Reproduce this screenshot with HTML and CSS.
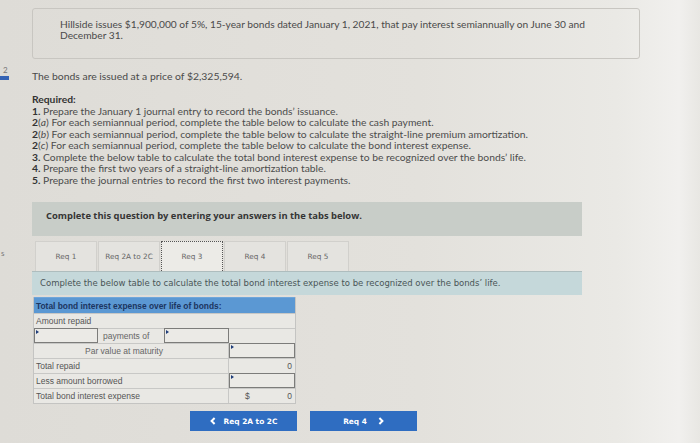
FILE: index.html
```html
<!DOCTYPE html>
<html>
<head>
<meta charset="utf-8">
<link rel="stylesheet" href="styles.css">
</head>
<body>
<div class="page">
  <div class="rail">
    <div class="rail-num">2</div>
    <div class="rail-bar"></div>
    <div class="rail-s">s</div>
  </div>
  <div class="main">
    <div class="intro">Hillside issues $1,900,000 of 5%, 15-year bonds dated January 1, 2021, that pay interest semiannually on June 30 and December 31.</div>
    <p class="price">The bonds are issued at a price of $2,325,594.</p>
    <div class="required">
      <div class="req-title">Required:</div>
      <div><b>1.</b> Prepare the January 1 journal entry to record the bonds’ issuance.</div>
      <div><b>2</b>(<i>a</i>) For each semiannual period, complete the table below to calculate the cash payment.</div>
      <div><b>2</b>(<i>b</i>) For each semiannual period, complete the table below to calculate the straight-line premium amortization.</div>
      <div><b>2</b>(<i>c</i>) For each semiannual period, complete the table below to calculate the bond interest expense.</div>
      <div><b>3.</b> Complete the below table to calculate the total bond interest expense to be recognized over the bonds’ life.</div>
      <div><b>4.</b> Prepare the first two years of a straight-line amortization table.</div>
      <div><b>5.</b> Prepare the journal entries to record the first two interest payments.</div>
    </div>
    <div class="banner">Complete this question by entering your answers in the tabs below.</div>
    <div class="tabs">
      <div class="tab">Req 1</div>
      <div class="tab">Req 2A to 2C</div>
      <div class="tab active">Req 3</div>
      <div class="tab">Req 4</div>
      <div class="tab">Req 5</div>
    </div>
    <div class="panel">Complete the below table to calculate the total bond interest expense to be recognized over the bonds’ life.</div>
    <div class="grid">
      <div class="cell head span4">Total bond interest expense over life of bonds:</div>
      <div class="cell span4">Amount repaid</div>
      <div class="cell input"></div>
      <div class="cell lbl">payments of</div>
      <div class="cell input"></div>
      <div class="cell"></div>
      <div class="cell span3 par">Par value at maturity</div>
      <div class="cell input"></div>
      <div class="cell span3">Total repaid</div>
      <div class="cell num">0</div>
      <div class="cell span3">Less amount borrowed</div>
      <div class="cell input"></div>
      <div class="cell span3">Total bond interest expense</div>
      <div class="cell num dollar"><span>$</span><span>0</span></div>
    </div>
    <div class="nav">
      <div class="btn"><svg width="6" height="8" viewBox="0 0 6 8"><path d="M4.6 1 L1.6 4 L4.6 7" fill="none" stroke="#fff" stroke-width="2"/></svg><span>Req 2A to 2C</span></div>
      <div class="btn next"><span>Req 4</span><svg width="6" height="8" viewBox="0 0 6 8"><path d="M1.4 1 L4.4 4 L1.4 7" fill="none" stroke="#fff" stroke-width="2"/></svg></div>
    </div>
  </div>
</div>
</body>
</html>
```

FILE: styles.css
```css
html, body {
  margin: 0;
  padding: 0;
}
body {
  width: 700px;
  height: 443px;
  overflow: hidden;
  background: linear-gradient(90deg, #dedcd7 0%, #e3e1dc 60%, #eae9e5 88%, #f1f0ee 97%, #e8e7e3 100%);
  font-family: Lato, "Open Sans", sans-serif;
  color: #464646;
}
.page {
  display: flex;
}
.rail {
  width: 12px;
  flex: none;
  padding-top: 66px;
}
.rail-num {
  font-size: 8px;
  line-height: 9px;
  color: #777;
  padding-left: 3px;
}
.rail-bar {
  width: 9px;
  height: 4px;
  background: #3563b4;
  margin-top: 1px;
}
.rail-s {
  margin-top: 169px;
  font-size: 8px;
  line-height: 9px;
  color: #777;
  padding-left: 1px;
}
.main {
  width: 608px;
  margin-left: 20px;
  padding-top: 8px;
}
.intro {
  border: 1px solid #c8c6c1;
  border-radius: 3px;
  padding: 10px 40px 17px 27px;
  font-size: 10.2px;
  line-height: 11px;
  color: #4a4a4a;
}
.price {
  margin: 12px 0 0;
  font-size: 10.4px;
  line-height: 11px;
  color: #4a4a4a;
}
.required {
  margin-top: 12px;
  font-size: 10.3px;
  line-height: 11.5px;
  color: #4c4c4c;
}
.req-title {
  font-weight: bold;
  color: #333;
}
.required b {
  color: #333;
}
.banner {
  margin-top: 16px;
  width: 536px;
  background: #c8cdc8;
  padding: 8px 0 14px 14px;
  font-family: "Open Sans", sans-serif;
  font-weight: bold;
  font-size: 9.4px;
  line-height: 12px;
  color: #353535;
}
.tabs {
  display: flex;
  margin: 5px 0 0 3px;
  height: 30px;
}
.tab {
  width: 60px;
  height: 29px;
  border: 1px solid #d1d0cc;
  border-bottom: none;
  margin-right: 1px;
  background: #e4e3df;
  display: flex;
  align-items: center;
  justify-content: center;
  font-family: "DejaVu Sans", sans-serif;
  font-size: 7.3px;
  color: #666;
}
.tab.active {
  background: #ecebe7;
  border: 1px dotted #555;
  border-bottom: none;
}
.panel {
  width: 542px;
  background: #c5d8da;
  border-top: 1px solid #aebdbe;
  padding: 5px 0 6px 8px;
  font-family: "DejaVu Sans", sans-serif;
  font-size: 8.5px;
  line-height: 12px;
  color: #4a5657;
}
.grid {
  margin: 2px 0 0 1px;
  width: 261px;
  display: grid;
  grid-template-columns: 64px 66px 65px 66px;
  grid-template-rows: 16px repeat(6, 15px);
  border: 1px solid #c4c4c2;
  border-top: none;
  background: #e9e8e4;
  font-family: "Liberation Sans", Arial, sans-serif;
  font-size: 8.5px;
  color: #555;
}
.cell {
  box-sizing: border-box;
  border-top: 1px solid #c8c8c6;
  padding: 0 2px;
  display: flex;
  align-items: center;
  position: relative;
  white-space: nowrap;
}
.span4 { grid-column: 1 / 5; }
.span3 { grid-column: 1 / 4; border-right: 1px solid #c8c8c6; }
.head {
  background: #5b98d3;
  border-top: 1px solid #6fa6da;
  color: #1b3560;
  font-weight: bold;
  font-size: 8.4px;
  padding-left: 2px;
}
.lbl {
  padding-left: 5px;
  color: #666;
}
.par {
  padding-left: 51px;
  color: #666;
}
.input {
  border: 1px solid #7c7c7a;
  background: #ebeae6;
}
.input::before {
  content: "";
  position: absolute;
  left: 1px;
  top: 1px;
  border-left: 3px solid #1e3c7a;
  border-top: 2px solid transparent;
  border-bottom: 2px solid transparent;
}
.num {
  justify-content: flex-end;
  padding-right: 3px;
}
.dollar {
  justify-content: space-between;
  padding-left: 16px;
}
.nav {
  display: flex;
  gap: 13px;
  margin: 7px 0 0 158px;
}
.btn {
  width: 107px;
  height: 20px;
  background: #2f6dc1;
  display: flex;
  align-items: center;
  justify-content: center;
  gap: 8px;
  font-family: "DejaVu Sans", sans-serif;
  font-weight: bold;
  font-size: 7.4px;
  color: #fff;
}
.btn svg {
  display: block;
}
.btn.next {
  gap: 11px;
}
```
